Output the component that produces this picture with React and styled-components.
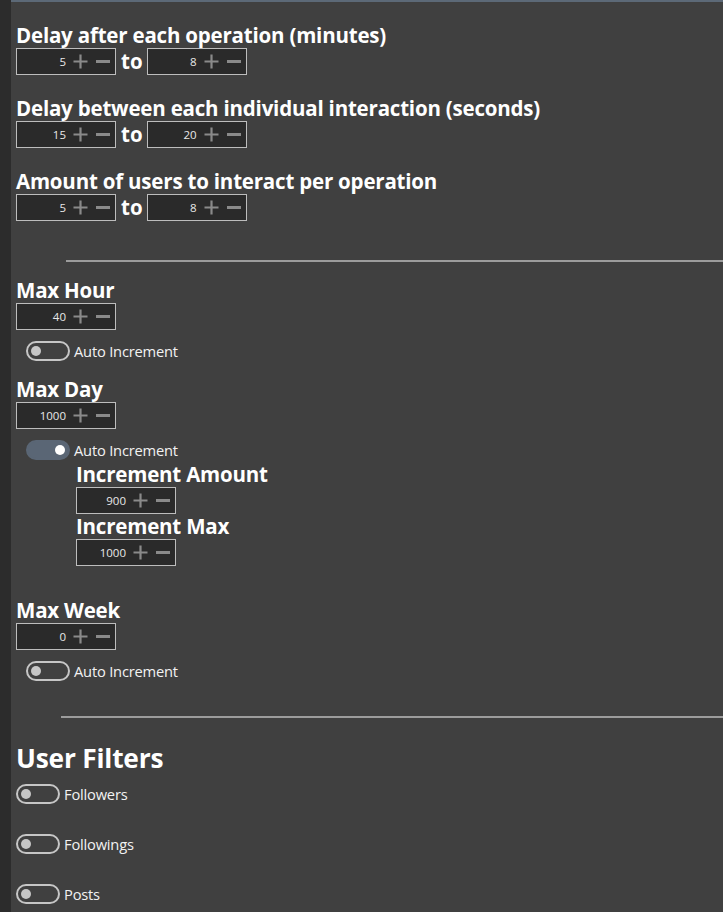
import React, { useState } from 'react';
import styled, { createGlobalStyle } from 'styled-components';

const GlobalStyle = createGlobalStyle`
   html, body {
      margin: 0;
      padding: 0;
      background: #404040;
   }
   body {
      font-family: 'Open Sans', 'Noto Sans', sans-serif;
      color: #ffffff;
   }
`;

const Page = styled.div`
   display: flex;
   min-height: 912px;
   background: #404040;
`;

const Rail = styled.aside`
   width: 11px;
   flex-shrink: 0;
   background: #2c2c2c;
`;

// column of settings, flex so that margins add up instead of collapsing
const Panel = styled.main`
   flex: 1;
   display: flex;
   flex-direction: column;
   align-items: flex-start;
   border-top: 2px solid #5c6977;
   padding: 21px 0 0 5px;
   overflow: hidden;
`;

const Heading = styled.h3`
   margin: ${(p) => p.$top || 0}px 0 0 0;
   font-size: ${(p) => (p.$big ? '26.3px' : '20.5px')};
   line-height: ${(p) => (p.$big ? '36px' : '25px')};
   font-weight: 700;
   letter-spacing: -0.2px;
   white-space: nowrap;
`;

const Group = styled.section`
   display: flex;
   flex-direction: column;
   align-items: flex-start;
   margin-bottom: ${(p) => (p.$gap === undefined ? 21 : p.$gap)}px;
`;

const RangeRow = styled.div`
   display: flex;
   align-items: center;
   height: 27px;
`;

const To = styled.span`
   font-size: 20.5px;
   font-weight: 700;
   margin: 0 4px 0 5px;
   line-height: 27px;
`;

const Box = styled.div`
   box-sizing: border-box;
   width: 100px;
   height: 27px;
   border: 1px solid #bdbdbd;
   background: #2a2a2a;
   display: flex;
   align-items: center;
   justify-content: flex-end;
   padding-right: 5px;
   gap: 7px;
`;

const Value = styled.span`
   font-size: 11.5px;
   color: #e8e8e8;
`;

const Steps = styled.span`
   display: flex;
   align-items: center;
   gap: 8px;
`;

const Divider = styled.hr`
   align-self: stretch;
   border: 0;
   height: 2px;
   background: #9c9c9c;
   margin: ${(p) => p.$top}px 0 ${(p) => p.$bottom}px ${(p) => p.$inset}px;
`;

const ToggleRow = styled.label`
   display: flex;
   align-items: center;
   gap: 4px;
   margin-left: ${(p) => p.$indent || 0}px;
   margin-top: ${(p) => p.$top || 0}px;
   height: 20px;
   cursor: pointer;
`;

const Track = styled.span`
   box-sizing: border-box;
   position: relative;
   width: 44px;
   height: 20px;
   border-radius: 10px;
   border: 2px solid ${(p) => (p.$on ? '#5a6675' : '#c6c6c6')};
   background: ${(p) => (p.$on ? '#5a6675' : 'transparent')};
   flex-shrink: 0;

   &::after {
      content: '';
      position: absolute;
      top: 3px;
      left: ${(p) => (p.$on ? '27px' : '3px')};
      width: 10px;
      height: 10px;
      border-radius: 50%;
      background: ${(p) => (p.$on ? '#ffffff' : '#c6c6c6')};
   }
`;

const Label = styled.span`
   font-size: 14.7px;
   color: #f2f2f2;
   letter-spacing: -0.2px;
`;

const Nested = styled.div`
   display: flex;
   flex-direction: column;
   align-items: flex-start;
   margin-left: 60px;
   margin-top: 2px;
`;

const Plus = () => (
   <svg width="15" height="15" viewBox="0 0 15 15">
      <path d="M7.5 0.5v14M0.5 7.5h14" stroke="#8a8a8a" strokeWidth="2.2" />
   </svg>
);

const Minus = () => (
   <svg width="14" height="15" viewBox="0 0 14 15">
      <path d="M0 7.5h14" stroke="#8a8a8a" strokeWidth="3" />
   </svg>
);

const NumberField = ({ value }) => (
   <Box>
      <Value>{value}</Value>
      <Steps>
         <Plus />
         <Minus />
      </Steps>
   </Box>
);

const Toggle = ({ label, on, indent, top }) => {
   const [checked, setChecked] = useState(!!on);
   return (
      <ToggleRow $indent={indent} $top={top} onClick={() => setChecked(!checked)}>
         <Track $on={checked} />
         <Label>{label}</Label>
      </ToggleRow>
   );
};

const Range = ({ title, from, to }) => (
   <Group>
      <Heading>{title}</Heading>
      <RangeRow>
         <NumberField value={from} />
         <To>to</To>
         <NumberField value={to} />
      </RangeRow>
   </Group>
);

const Limit = ({ title, value, on, children, gap }) => (
   <Group $gap={gap}>
      <Heading>{title}</Heading>
      <NumberField value={value} />
      <Toggle label="Auto Increment" on={on} indent={10} top={11} />
      {children}
   </Group>
);

export default function App() {
   return (
      <>
         <GlobalStyle />
         <Page>
            <Rail />
            <Panel>
               <Range title="Delay after each operation (minutes)" from={5} to={8} />
               <Range title="Delay between each individual interaction (seconds)" from={15} to={20} />
               <Range title="Amount of users to interact per operation" from={5} to={8} />

               <Divider $top={18} $bottom={16} $inset={50} />

               <Limit title="Max Hour" value={40} gap={16} />
               <Limit title="Max Day" value={1000} on gap={32}>
                  <Nested>
                     <Heading>Increment Amount</Heading>
                     <NumberField value={900} />
                     <Heading>Increment Max</Heading>
                     <NumberField value={1000} />
                  </Nested>
               </Limit>
               <Limit title="Max Week" value={0} gap={0} />

               <Divider $top={35} $bottom={22} $inset={45} />

               <Heading $big>User Filters</Heading>
               <Toggle label="Followers" top={8} />
               <Toggle label="Followings" top={30} />
               <Toggle label="Posts" top={30} />
            </Panel>
         </Page>
      </>
   );
}
